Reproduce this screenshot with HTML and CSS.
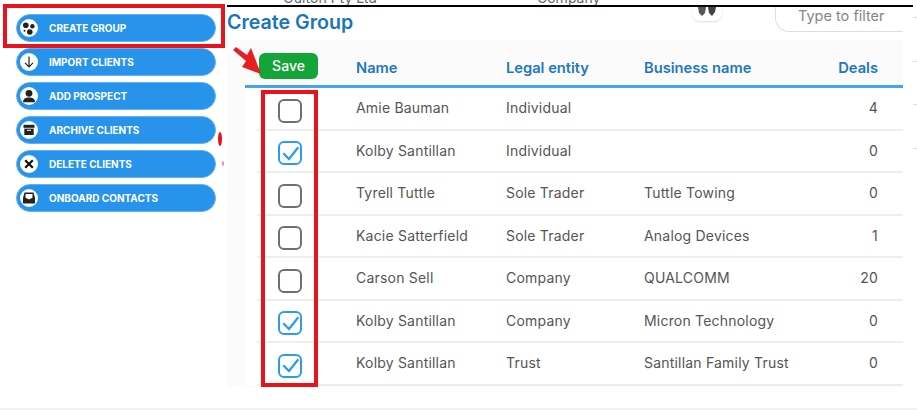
FILE: index.html
```html
<!DOCTYPE html>
<html lang="en">
<head>
<meta charset="utf-8">
<title>Create Group</title>
<link rel="stylesheet" href="styles.css">
</head>
<body>
<div class="page">
  <nav class="sidebar">
    <div class="nav-btn"><span class="nav-icon"><svg viewBox="0 0 18 18"><circle cx="9" cy="9" r="9" fill="#fff"/><circle cx="5.8" cy="6.2" r="2.8" fill="#222"/><circle cx="12.4" cy="7.2" r="2.2" fill="#222"/><circle cx="9.8" cy="13" r="2.8" fill="#222"/><circle cx="4.5" cy="11.8" r="1" fill="#222"/></svg></span>CREATE GROUP</div>
    <div class="nav-btn"><span class="nav-icon"><svg viewBox="0 0 18 18"><circle cx="9" cy="9" r="9" fill="#fff"/><path d="M9 3.5V13.5M5 9.8L9 13.8L13 9.8" fill="none" stroke="#222" stroke-width="1.2"/></svg></span>IMPORT CLIENTS</div>
    <div class="nav-btn"><span class="nav-icon"><svg viewBox="0 0 18 18"><circle cx="9" cy="9" r="9" fill="#fff"/><circle cx="9" cy="6.3" r="3.4" fill="#222"/><path d="M3 15.2C3 11.4 5.8 10.4 9 10.4S15 11.4 15 15.2Z" fill="#222"/></svg></span>ADD PROSPECT</div>
    <div class="nav-btn"><span class="nav-icon"><svg viewBox="0 0 18 18"><circle cx="9" cy="9" r="9" fill="#fff"/><rect x="3.5" y="3.8" width="11" height="3" fill="#222"/><path d="M4.3 7.6H13.7V14H4.3Z" fill="#222"/><rect x="7" y="8.8" width="4" height="1" fill="#fff"/></svg></span>ARCHIVE CLIENTS</div>
    <div class="nav-btn"><span class="nav-icon"><svg viewBox="0 0 18 18"><circle cx="9" cy="9" r="9" fill="#fff"/><path d="M5.2 5.2L12.8 12.8M12.8 5.2L5.2 12.8" stroke="#111" stroke-width="2.2"/></svg></span>DELETE CLIENTS</div>
    <div class="nav-btn"><span class="nav-icon"><svg viewBox="0 0 18 18"><circle cx="9" cy="9" r="9" fill="#fff"/><path d="M4.5 3.5H13.5L15 9V14.5H3V9Z" fill="#222"/><path d="M5.5 5H12.5V8.8L9 10.5L5.5 8.8Z" fill="#fff"/></svg></span>ONBOARD CONTACTS</div>
  </nav>
  <main class="main">
    <div class="clipped-row"><span class="clip-name">Oulton Pty Ltd</span><span class="clip-type">Company</span></div>
    <div class="content">
      <div class="title-row">
        <h1 class="title">Create Group</h1>
        <span class="chip"><svg viewBox="0 0 20 10" width="20" height="10"><path d="M1 0H9L8 6L5 9L2 6Z" fill="#555"/><path d="M11 0H19L18 5L15 9L12 6Z" fill="#444"/></svg></span>
        <div class="filter">Type to filter</div>
      </div>
      <section class="table">
        <div class="row head"><div class="save-cell"><span class="save">Save</span></div><div>Name</div><div>Legal entity</div><div>Business name</div><div class="num">Deals</div></div>
        <div class="row"><div class="cb-cell"><span class="cb"></span></div><div>Amie Bauman</div><div>Individual</div><div></div><div class="num">4</div></div>
        <div class="row"><div class="cb-cell"><span class="cb on"><svg viewBox="0 0 20 20"><path d="M3.3 10.3L9 16L18.3 4.3" fill="none" stroke="#2c9bf0" stroke-width="2.2"/></svg></span></div><div>Kolby Santillan</div><div>Individual</div><div></div><div class="num">0</div></div>
        <div class="row"><div class="cb-cell"><span class="cb"></span></div><div>Tyrell Tuttle</div><div>Sole Trader</div><div>Tuttle Towing</div><div class="num">0</div></div>
        <div class="row"><div class="cb-cell"><span class="cb"></span></div><div>Kacie Satterfield</div><div>Sole Trader</div><div>Analog Devices</div><div class="num">1</div></div>
        <div class="row"><div class="cb-cell"><span class="cb"></span></div><div>Carson Sell</div><div>Company</div><div>QUALCOMM</div><div class="num">20</div></div>
        <div class="row"><div class="cb-cell"><span class="cb on"><svg viewBox="0 0 20 20"><path d="M3.3 10.3L9 16L18.3 4.3" fill="none" stroke="#2c9bf0" stroke-width="2.2"/></svg></span></div><div>Kolby Santillan</div><div>Company</div><div>Micron Technology</div><div class="num">0</div></div>
        <div class="row"><div class="cb-cell"><span class="cb on"><svg viewBox="0 0 20 20"><path d="M3.3 10.3L9 16L18.3 4.3" fill="none" stroke="#2c9bf0" stroke-width="2.2"/></svg></span></div><div>Kolby Santillan</div><div>Trust</div><div>Santillan Family Trust</div><div class="num">0</div></div>
      </section>
    </div>
  </main>
  <div class="mark mark-nav"></div>
  <div class="mark mark-col"></div>
  <svg class="arrow" viewBox="0 0 30 30"><path d="M1 3L4 0L15 8L19 1L29 27L10 20L14 14Z" fill="#e5201f"/></svg>
  <div class="blob blob-a"></div>
  <div class="blob blob-b"></div>
  <div class="tick tick-a"></div>
  <div class="tick tick-b"></div>
  <div class="tick tick-c"></div>
  <div class="tick tick-d"></div>
</div>
<div class="bottom"></div>
</body>
</html>
```

FILE: styles.css
```css
* { box-sizing: border-box; }
html, body { margin: 0; padding: 0; background: #fff; }
body { width: 917px; height: 410px; overflow: hidden; font-family: "Inter", "Liberation Sans", sans-serif; }
.page { position: relative; display: flex; height: 408px; overflow: hidden; }

.sidebar { width: 227px; flex: none; padding: 14px 0 0 16px; display: flex; flex-direction: column; gap: 6px; }
.nav-btn { width: 200px; height: 28px; border-radius: 14px; background: #2793ea; border: 1px solid #62b2f0; color: #fff; font-size: 10px; font-weight: 700; display: flex; align-items: center; padding-left: 3px; gap: 11px; }
.nav-icon { width: 18px; height: 18px; display: block; flex: none; }
.nav-icon svg { display: block; width: 18px; height: 18px; }

.main { width: 686px; height: 387px; flex: none; position: relative; }
.clipped-row { height: 5px; overflow: hidden; position: relative; font-size: 14px; color: #666; line-height: 5px; background: #fff; }
.clip-name { position: absolute; left: 56px; top: -5px; }
.clip-type { position: absolute; left: 310px; top: -5px; }
.content { border-top: 2px solid #000; background: #fff; height: 382px; }
.title-row { height: 33px; background: #fff; display: flex; position: relative; }
.title { margin: 0; font-size: 19.6px; line-height: 26px; font-weight: 600; color: #1a75bb; padding: 2px 0 0 0; }
.chip { position: absolute; left: 465px; top: 0; width: 30px; height: 14px; background: #fff; border-radius: 0 0 8px 8px; box-shadow: 0 1px 2px #ddd; display: flex; justify-content: center; }
.filter { position: absolute; left: 548px; top: 0; width: 128px; height: 25px; border: 1px solid #ddd; border-width: 0 0 1px 1px; border-radius: 0 0 0 14px; font-size: 14.5px; color: #858585; padding: 0 0 0 22px; line-height: 17px; }

.table { width: 676px; height: 347px; padding-left: 18px; background: #fbfbfb; }
.row { display: grid; grid-template-columns: 111px 150px 138px 178px 81px; align-items: center; height: 42.5px; color: #555; font-size: 14px; letter-spacing: 0.2px; background: #fff linear-gradient(#eee, #eee) right bottom / calc(100% - 12px) 2px no-repeat; }
.row > div { padding-bottom: 3px; }
.row > .num { text-align: right; padding-right: 25px; }
.row > .cb-cell { padding: 3px 0 0 33px; }
.cb { display: block; width: 24px; height: 24px; border: 2.5px solid #6f6f6f; border-radius: 6px; }
.cb.on { border-color: #2c9bf0; }
.cb svg { display: block; width: 20px; height: 20px; margin: -0.5px; }

.row.head { height: 48px; background: none; border-bottom: 3px solid #44a4ef; color: #1f78bd; font-size: 14.7px; font-weight: 600; padding-top: 8px; letter-spacing: 0; }
.row.head > div { padding-top: 3px; padding-bottom: 0; }
.row.head > .save-cell { padding: 0 0 2px 14px; }
.save { display: inline-block; width: 59px; height: 26px; border-radius: 6px; background: #13a538; color: #fff; font-weight: 500; font-size: 14px; line-height: 25px; text-align: center; }

.mark { position: absolute; border-style: solid; border-color: #e8141c; }
.mark-nav { left: 3px; top: 4px; width: 222px; height: 44px; border-width: 4px; }
.mark-col { left: 261px; top: 90px; width: 57px; height: 297px; border-width: 4px; }
.arrow { position: absolute; left: 232px; top: 47px; width: 30px; height: 30px; }
.blob { position: absolute; background: #e8141c; border-radius: 50%; }
.blob-a { left: 218px; top: 132px; width: 4px; height: 14px; }
.blob-b { left: 222px; top: 161px; width: 2px; height: 5px; opacity: .5; }
.tick { position: absolute; left: 913px; width: 4px; height: 1px; background: #ddd; }
.tick-a { top: 17px; }
.tick-b { top: 61px; }
.tick-c { top: 104px; }
.tick-d { top: 148px; }
.bottom { height: 2px; background: #eef0f5; }
```
